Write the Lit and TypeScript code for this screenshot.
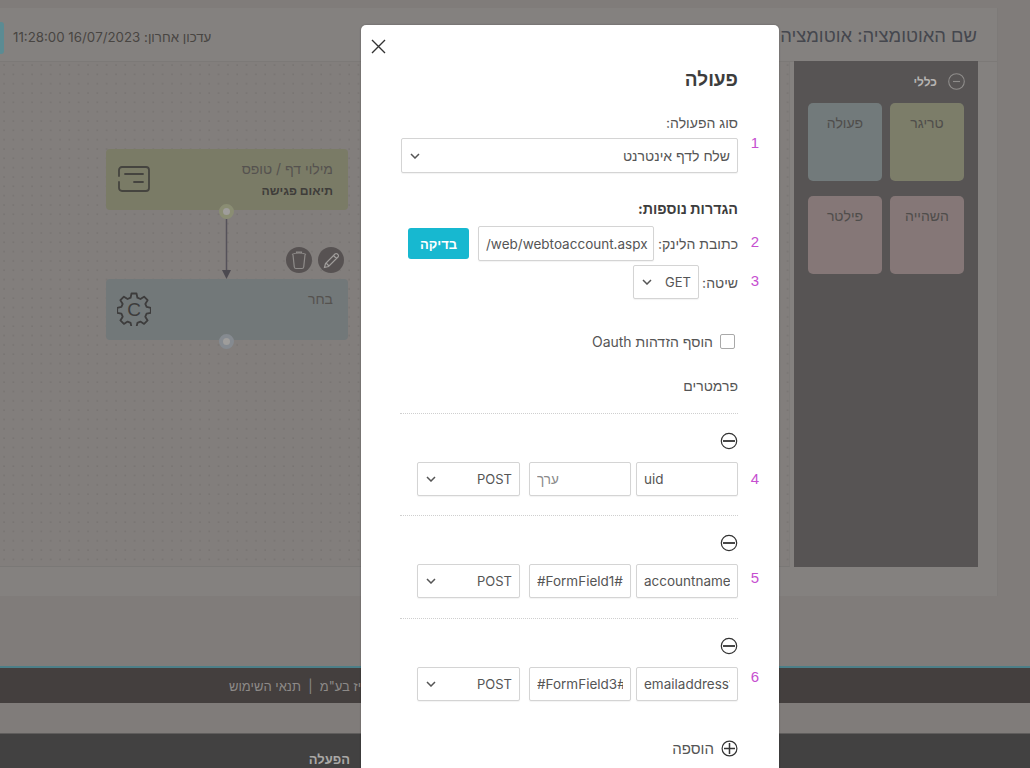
import { LitElement, html, css } from "lit";
import { customElement } from "lit/decorators.js";

const chevron = html`<svg class="chev" width="10" height="6" viewBox="0 0 10 6"><path d="M1 1l4 4 4-4" fill="none" stroke="#555" stroke-width="1.5"/></svg>`;
const minus = html`<svg class="round" width="18" height="18" viewBox="0 0 18 18"><circle cx="9" cy="9" r="7.7" fill="none" stroke="#333" stroke-width="1.2"/><path d="M3 9h12" stroke="#333" stroke-width="1.8"/></svg>`;
const plus = html`<svg class="round" width="17" height="17" viewBox="0 0 17 17"><circle cx="8.5" cy="8.5" r="7.4" fill="none" stroke="#333" stroke-width="1.2"/><path d="M3 8.5h11M8.5 3v11" stroke="#333" stroke-width="1.5"/></svg>`;

@customElement("app-root")
export class AppRoot extends LitElement {
  static styles = css`
    :host { display: block; position: relative; width: 1030px; height: 768px; overflow: hidden; background: #807c7a; font-family: "Inter", "Liberation Sans", sans-serif; font-size: 14px; color: #4a4a4a; }
    * { box-sizing: border-box; }
    .page { display: flex; flex-direction: column; height: 768px; padding-top: 8px; }
    .panel { height: 588px; width: 997px; background: #84817f; flex: none; box-shadow: 1px 0 0 #7d7a78; display: flex; flex-direction: column; }
    .head { height: 54px; flex: none; display: flex; align-items: center; justify-content: space-between; padding: 6px 20px 0 0; border-bottom: 1px solid #7c7977; }
    .stamp { display: flex; align-items: center; gap: 9px; font-size: 13.3px; color: #484542; }
    .stamp span { padding-bottom: 2px; }
    .tealbtn { width: 4px; height: 32px; background: #5b8b93; border-radius: 0 3px 3px 0; }
    .title { font-size: 18.4px; color: #45474e; white-space: nowrap; margin-top: -4px; }
    .body { flex: 1; display: flex; padding-right: 19px; padding-bottom: 29px; }
    .canvas { position: relative; width: 790px; flex: none; background-color: #827e7c; background-image: radial-gradient(circle at 1px 1px, #767270 0.5px, transparent 0.9px); background-size: 9.33px 9.33px; background-position: 3px 2px; border-bottom: 1px solid #7a7876; border-right: 1px solid #7e7b79; }
    .side { margin: -1px 0 0 4px; width: 184px; background: #575454; padding: 12px 14px 0 14px; }
    .sidehead { display: flex; align-items: center; gap: 11px; height: 16px; font-size: 12px; font-weight: 700; color: #b5b3b1; margin-right: -1px; }
    .tiles { display: grid; grid-template-columns: 74px 74px; grid-auto-rows: 78px; gap: 15px 8px; margin-top: 14px; }
    .tile { border-radius: 5px; padding-top: 11px; text-align: center; font-size: 14px; color: #4f4d4b; }
    .g { background: #7c7d69; } .b { background: #727a7b; } .p { background: #857777; }
    .node { position: absolute; left: 106px; width: 242px; height: 61px; border-radius: 4px; padding: 10px 15px 0 0; line-height: 20px; color: #55524f; font-size: 14px; }
    .node b { display: block; margin-top: 2px; font-size: 12.2px; color: #3f3d3a; }
    .n1 { top: 87px; background: #7a7b66; }
    .n2 { top: 217px; background: #727879; }
    .nodeicon { position: absolute; left: 11px; }
    .port { position: absolute; left: 219px; width: 15px; height: 15px; border-radius: 50%; background: #9f9d9b; border: 4px solid #8a8d73; }
    .port.p1 { top: 142px; } .port.p2 { top: 272px; border-color: #858a90; }
    .link { position: absolute; left: 219px; top: 157px; }
    .tool { position: absolute; top: 185px; width: 26px; height: 26px; border-radius: 50%; background: #575252; display: flex; align-items: center; justify-content: center; }
    .footer { margin-top: 70px; flex: none; height: 37px; background: #443f3e; border-top: 2px solid #4c7f88; display: flex; padding-left: 229px; align-items: center; font-size: 13px; color: #8d8a88; white-space: nowrap; }
    .footer span { direction: rtl; }
    .actionbar { margin-top: 30px; flex: none; height: 35px; background: #424141; border-top: 1px solid #5f5d5c; padding: 18px 680px 0 0; font-size: 13px; line-height: 15px; font-weight: 700; color: #aaa8a6; text-align: right; }

    .modal { position: absolute; left: 361px; top: 25px; width: 418px; height: 760px; background: #fff; border-radius: 5px 5px 0 0; box-shadow: 0 0 2px rgba(0,0,0,.3); padding: 0 41px 0 40px; direction: rtl; color: #555; }
    .close { position: absolute; left: 10px; top: 14px; display: block; }
    h2 { margin: 0; padding-top: 43px; height: 65px; line-height: 24px; font-size: 19px; font-weight: 700; color: #3d3d3d; }
    .lab { height: 20px; margin-top: 23px; line-height: 20px; font-size: 14px; color: #555; }
    .row { position: relative; }
    .num { position: absolute; right: -21px; color: #c64fd0; font-size: 15px; line-height: 20px; font-family: "Liberation Sans", sans-serif; }
    .sel { height: 35px; border: 1px solid #d4d4d4; border-radius: 2px; box-shadow: 0 1px 1px rgba(0,0,0,.05); background: #fff; display: flex; align-items: center; justify-content: space-between; padding: 0 7px 0 8px; font-size: 13px; color: #555; }
    .sel.he { font-size: 14px; }
    .chev { flex: none; }
    h3 { margin: 26px 0 0; height: 20px; line-height: 20px; font-size: 14.3px; font-weight: 700; color: #3d3d3d; }
    input { font: inherit; font-size: 13.5px; color: #555; height: 100%; border: 1px solid #d4d4d4; border-radius: 2px; box-shadow: 0 1px 1px rgba(0,0,0,.05); padding: 0 7px; background: #fff; outline: none; min-width: 0; }
    input::placeholder { color: #8a8a8a; opacity: 1; }
    .link-row { display: flex; align-items: center; height: 35px; margin-top: 7px; }
    .link-row label { width: 84px; flex: none; }
    .link-row input { width: 176px; flex: none; direction: ltr; padding-right: 4px; }
    .test { margin-right: 9px; width: 61px; height: 31px; flex: none; background: #17b8d0; color: #fff; font-size: 13px; font-weight: 700; border-radius: 3px; display: flex; align-items: center; justify-content: center; }
    .method { display: flex; align-items: center; height: 34px; margin-top: 4px; }
    .method label { width: 39px; flex: none; }
    .method .sel { width: 66px; height: 34px; }
    .check { display: flex; align-items: center; gap: 7px; margin-top: 32px; margin-right: 3px; height: 20px; font-size: 14px; }
    .box { width: 15px; height: 15px; border: 1px solid #a9a9a9; border-radius: 2px; }
    .params { margin-top: 25px; height: 20px; line-height: 20px; font-size: 14px; }
    .param { border-top: 1px dotted #cfcfcf; height: 103px; margin-left: -1px; padding-top: 18px; }
    .param.first { margin-top: 17px; height: 102px; }
    .fields { display: grid; grid-template-columns: 102px 102px 107px; gap: 5px; justify-content: start; height: 34px; margin-top: 12px; }
    .fields input { direction: ltr; padding: 0 7px; }
    .fields .sel { height: 34px; margin-right: 4px; }
    .round { display: block; }
    .add { display: flex; align-items: center; gap: 7px; margin-top: 18px; font-size: 15px; height: 18px; }
  `;

  private field(name: string, value: string, n: number, top: number, cls = "") {
    return html`<div class="param ${cls}">
      ${minus}
      <div class="row fields">
        <span class="num" style="top:${top}px">${n}</span>
        <input value=${name} />
        <input dir="ltr" placeholder="ערך" style=${value ? "" : "direction:rtl;text-align:left"} value=${value} />
        <div class="sel"><span>POST</span>${chevron}</div>
      </div>
    </div>`;
  }

  render() {
    return html`
      <div class="page">
        <div class="panel">
          <div class="head">
            <div class="stamp"><div class="tealbtn"></div><span dir="rtl">עדכון אחרון: 16/07/2023 11:28:00</span></div>
            <div class="title" dir="rtl">שם האוטומציה: אוטומציה</div>
          </div>
          <div class="body">
            <div class="canvas">
              <div class="node n1" dir="rtl">מילוי דף / טופס<b>תיאום פגישה</b>
                <svg class="nodeicon" style="top:16px" width="34" height="28" viewBox="0 0 34 28" fill="none" stroke="#45443f" stroke-width="1.8" stroke-linecap="round"><path d="M2 11V5a3 3 0 0 1 3-3h24a3 3 0 0 1 3 3v18a3 3 0 0 1-3 3H5a3 3 0 0 1-3-3v-6M8 9h18M17 17h9"/></svg>
              </div>
              <div class="port p1"></div>
              <svg class="link" width="15" height="60" viewBox="0 0 15 60"><path d="M7.5 0v52" stroke="#55525a" stroke-width="1.5"/><path d="M3 51h9l-4.5 9z" fill="#4c4a50"/></svg>
              <div class="tool" style="left:286px"><svg width="16" height="19" viewBox="0 0 16 19" fill="none" stroke="#8f8c8a" stroke-width="1.2"><path d="M1 3.500c3-2 11-2 14 0M2 4l1.300 12c.1 1 .8 1.500 1.700 1.500h6c.9 0 1.600-.5 1.700-1.500L14 4M5.500 2V1h5v1"/></svg></div>
              <div class="tool" style="left:318px"><svg width="17" height="17" viewBox="0 0 17 17" fill="none" stroke="#a09d9b" stroke-width="1.2"><path d="M1.500 15.500l1-4L12 2a1.600 1.600 0 0 1 2.300 0l.7.700a1.600 1.600 0 0 1 0 2.300l-9.500 9.500zM3 11l3 3M10.500 3.500l3 3"/></svg></div>
              <div class="node n2" dir="rtl">בחר
                <svg class="nodeicon" style="top:13px;left:11px" width="34" height="34" viewBox="0 0 34 34" fill="none" stroke="#3d3c3c" stroke-width="1.8"><path d="M14.500 1.500h5l.9 4.200 3 1.300 3.700-2.300 3.500 3.500-2.300 3.700 1.300 3 4.200.9v5l-4.200.9-1.300 3 2.300 3.700-3.500 3.500-3.700-2.300-3 1.300-.9 4.200h-5l-.9-4.200-3-1.300-3.700 2.300-3.500-3.500 2.300-3.700-1.300-3-4.200-.9v-5l4.200-.9 1.300-3-2.300-3.700 3.500-3.500 3.700 2.300 3-1.300z" stroke-linejoin="round"/><text x="17" y="23.500" text-anchor="middle" font-size="19" font-family="Liberation Sans" fill="#3d3c3c" stroke="none">C</text></svg>
              </div>
              <div class="port p2"></div>
            </div>
            <div class="side" dir="rtl">
              <div class="sidehead"><svg width="17" height="17" viewBox="0 0 17 17" fill="none" stroke="#8f8d8b" stroke-width="1.1"><circle cx="8.500" cy="8.500" r="7.800"/><path d="M5 8.500h7"/></svg>כללי</div>
              <div class="tiles">
                <div class="tile g">טריגר</div><div class="tile b">פעולה</div>
                <div class="tile p">השהייה</div><div class="tile p">פילטר</div>
              </div>
            </div>
          </div>
        </div>
        <div class="footer"><span>אקטיב טרייז בע"מ&nbsp; | &nbsp;תנאי השימוש</span></div>
        <div class="actionbar" dir="ltr"><span dir="rtl">הפעלה</span></div>
      </div>

      <div class="modal">
        <svg class="close" width="15" height="15" viewBox="0 0 15 15"><path d="M1 1l13 13M14 1L1 14" stroke="#333" stroke-width="1.4"/></svg>
        <h2>פעולה</h2>
        <div class="lab">סוג הפעולה:</div>
        <div class="row" style="margin-top:5px">
          <span class="num" style="top:-5px">1</span>
          <div class="sel he"><span>שלח לדף אינטרנט</span>${chevron}</div>
        </div>
        <h3>הגדרות נוספות:</h3>
        <div class="row link-row">
          <span class="num" style="top:6px">2</span>
          <label>כתובת הלינק:</label>
          <input value="/web/webtoaccount.aspx" />
          <div class="test">בדיקה</div>
        </div>
        <div class="row method">
          <span class="num" style="top:6px">3</span>
          <label>שיטה:</label>
          <div class="sel"><span>GET</span>${chevron}</div>
        </div>
        <div class="check"><div class="box"></div><span>הוסף הזדהות Oauth</span></div>
        <div class="params">פרמטרים</div>
        ${this.field("uid", "", 4, 7, "first")}
        ${this.field("accountname", "#FormField1#", 5, 4)}
        ${this.field("emailaddress1", "#FormField3#", 6, 0)}
        <div class="add">${plus}<span>הוספה</span></div>
      </div>
    `;
  }
}
